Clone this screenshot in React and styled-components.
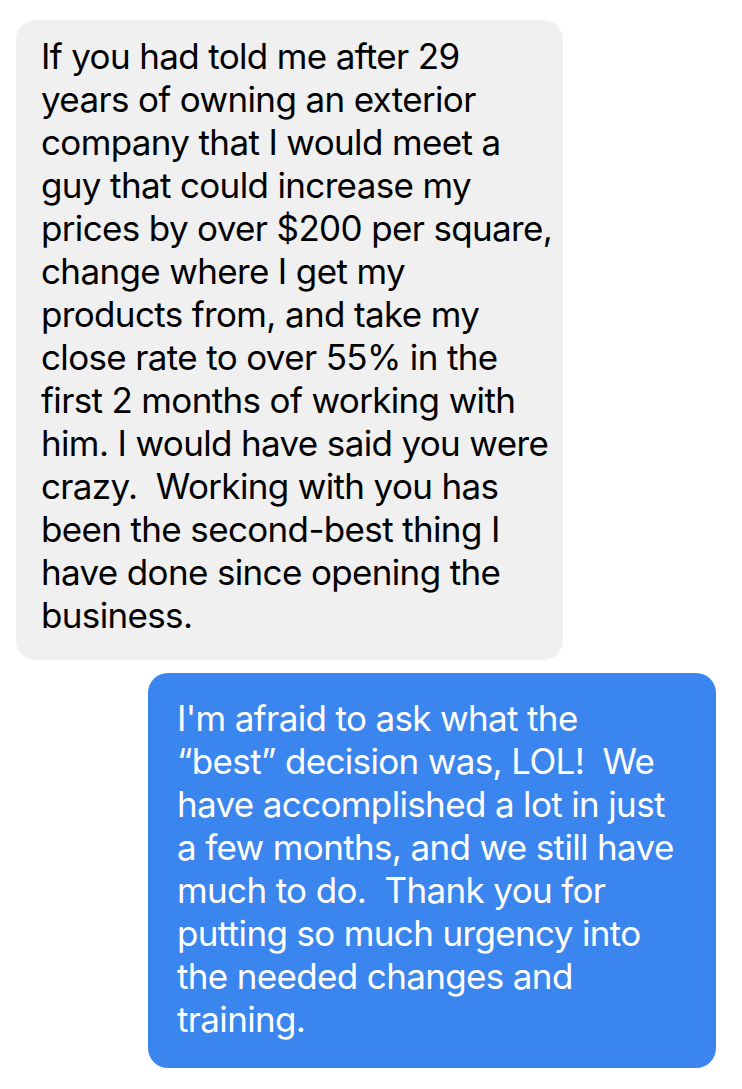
import styled, {createGlobalStyle} from 'styled-components';

const GlobalStyle = createGlobalStyle`
    html, body {
        margin: 0;
        padding: 0;
        background: #ffffff;
    }
`

const Thread = styled.div`
    display: flex;
    flex-direction: column;
    gap: 13px;
    padding: 20px 26px 22px 16px;
    font-family: Inter, "Noto Sans", "Liberation Sans", sans-serif;
`

const Bubble = styled.div`
    box-sizing: border-box;
    width: ${props => props.$width}px;
    align-self: ${props => props.$mine ? 'flex-end' : 'flex-start'};
    background: ${props => props.$mine ? '#3b86ee' : '#f0f0f0'};
    color: ${props => props.$mine ? '#ffffff' : '#000000'};
    border-radius: 20px;
    padding: ${props => props.$mine ? '24px 20px 27px 29px' : '15px 20px 23px 25px'};
    font-size: 35px;
    line-height: 43px;
    letter-spacing: -0.65px;
`

const Line = styled.div`
    white-space: pre;
`

const received = [
    'If you had told me after 29',
    'years of owning an exterior',
    'company that I would meet a',
    'guy that could increase my',
    'prices by over $200 per square,',
    'change where I get my',
    'products from, and take my',
    'close rate to over 55% in the',
    'first 2 months of working with',
    'him. I would have said you were',
    'crazy.  Working with you has',
    'been the second-best thing I',
    'have done since opening the',
    'business.',
];

const sent = [
    "I'm afraid to ask what the",
    '\u201Cbest\u201D decision was, LOL!  We',
    'have accomplished a lot in just',
    'a few months, and we still have',
    'much to do.  Thank you for',
    'putting so much urgency into',
    'the needed changes and',
    'training.',
];

const App = () => {
    return (
        <>
            <GlobalStyle />
            <Thread>
                <Bubble $width={547}>
                    {received.map((line, i) => <Line key={i}>{line}</Line>)}
                </Bubble>
                <Bubble $mine $width={568}>
                    {sent.map((line, i) => <Line key={i}>{line}</Line>)}
                </Bubble>
            </Thread>
        </>
    );
}

export default App;
